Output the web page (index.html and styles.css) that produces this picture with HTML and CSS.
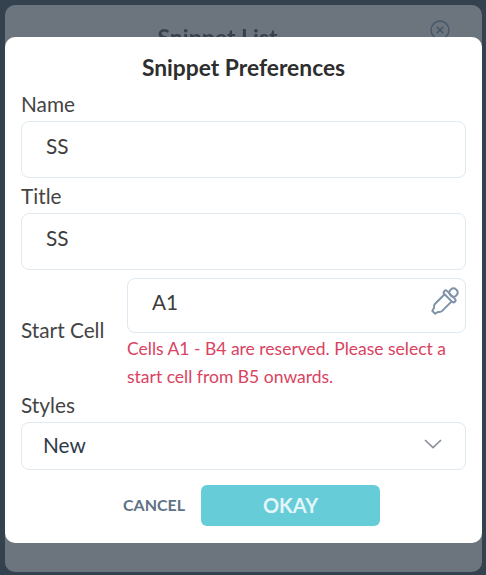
FILE: index.html
```html
<!DOCTYPE html>
<html lang="en">
<head>
<meta charset="utf-8">
<title>Snippet Preferences</title>
<link rel="stylesheet" href="styles.css">
</head>
<body>
<div class="panel">
  <div class="panel-head">
    <span class="panel-title">Snippet List</span>
    <svg class="panel-close" viewBox="0 0 20 20" width="20" height="20" aria-hidden="true">
      <circle cx="10" cy="10" r="9" fill="none" stroke="#46566a" stroke-width="1.4"/>
      <path d="M6.8 6.8l6.4 6.4M13.200 6.800l-6.400 6.400" fill="none" stroke="#46566a" stroke-width="1.600"/>
    </svg>
  </div>
  <div class="dialog">
    <h1 class="dialog-title">Snippet Preferences</h1>
    <div class="label label-name">Name</div>
    <div class="field field-tall"><span class="value">SS</span></div>
    <div class="label label-title">Title</div>
    <div class="field field-tall field-title"><span class="value">SS</span></div>
    <div class="start-row">
      <div class="start-label">Start Cell</div>
      <div class="start-main">
        <div class="field field-start">
          <span class="value">A1</span>
          <svg class="picker" viewBox="0 0 28 28" width="28" height="28" aria-hidden="true">
            <g transform="rotate(45 14 14)" fill="none" stroke="#7f93a8" stroke-width="2" stroke-linejoin="round">
              <rect x="10" y="-2" width="8" height="8" rx="3.500"/>
              <rect x="6.500" y="5.500" width="15" height="4" rx="2"/>
              <path d="M9 9.500v13.500c0 1.500 .5 2.500 2 3.500l1 3.500h4l1-3.500c1.500-1 2-2 2-3.500v-13.500"/>
            </g>
          </svg>
        </div>
        <p class="error">Cells A1 - B4 are reserved. Please select a start cell from B5 onwards.</p>
      </div>
    </div>
    <div class="label label-styles">Styles</div>
    <div class="field field-select">
      <span class="select-value">New</span>
      <svg class="chevron" viewBox="0 0 18 10" width="18" height="10" aria-hidden="true">
        <path d="M1 1l8 7.500 8-7.500" fill="none" stroke="#8a9199" stroke-width="1.700"/>
      </svg>
    </div>
    <div class="actions">
      <span class="cancel">CANCEL</span>
      <span class="okay">OKAY</span>
    </div>
  </div>
</div>
</body>
</html>
```
FILE: styles.css
```css
html, body {
  margin: 0;
  height: 100%;
}
body {
  box-sizing: border-box;
  padding: 5px 4px 3px 5px;
  background: #34424f;
  font-family: Lato, "Open Sans", sans-serif;
  color: #3a3a3a;
  overflow: hidden;
}
.panel {
  box-sizing: border-box;
  height: 567px;
  background: #6c757e;
  border-radius: 10px;
  overflow: hidden;
  filter: blur(0.6px);
}
.panel-head {
  position: relative;
  height: 32px;
  overflow: hidden;
  text-align: center;
  padding-right: 52px;
}
.panel-title {
  display: block;
  padding-top: 20px;
  font-size: 23px;
  font-weight: 700;
  line-height: 24px;
  color: #37424e;
}
.panel-close {
  position: absolute;
  top: 15px;
  right: 32px;
}
.dialog {
  box-sizing: border-box;
  height: 506px;
  padding: 17px 16px 0 16px;
  background: #fff;
  border-radius: 10px;
}
.dialog-title {
  margin: 0;
  font-size: 22.800px;
  font-weight: 700;
  line-height: 26px;
  text-align: center;
  color: #2e2e2e;
}
.label {
  font-size: 20.800px;
  line-height: 24px;
  color: #444;
}
.label-name {
  margin-top: 12px;
  margin-bottom: 5px;
}
.label-title {
  margin-top: 6px;
  margin-bottom: 5px;
}
.label-styles {
  margin-top: 2px;
  margin-bottom: 5px;
}
.field {
  box-sizing: border-box;
  display: flex;
  align-items: center;
  background: #fff;
  border: 1.500px solid #dfe9ef;
  border-radius: 8px;
}
.field-tall {
  width: 445px;
  height: 57px;
  padding: 0 0 8px 24px;
}
.value {
  font-size: 20.800px;
  color: #3d3d3d;
}
.start-row {
  display: flex;
  align-items: flex-start;
  margin-top: 8px;
}
.start-label {
  width: 106px;
  flex: none;
  padding-top: 40px;
  font-size: 20.800px;
  line-height: 24px;
  color: #444;
}
.start-main {
  flex: 1;
  min-width: 0;
}
.field-start {
  width: 339px;
  height: 55px;
  padding: 0 6px 9px 24px;
  justify-content: space-between;
}
.error {
  margin: 2px 0 0;
  width: 330px;
  font-size: 17.500px;
  line-height: 28px;
  color: #d9435f;
}
.field-select {
  width: 445px;
  height: 48px;
  padding: 0 23px 3px 21px;
  justify-content: space-between;
}
.select-value {
  font-size: 20.800px;
  color: #2f3a48;
}
.chevron {
  margin-top: -2px;
}
.actions {
  display: flex;
  align-items: center;
  margin-top: 15px;
  padding-left: 102px;
}
.cancel {
  width: 78px;
  flex: none;
  margin-top: -3px;
  font-size: 16px;
  font-weight: 700;
  color: #5e7287;
}
.okay {
  box-sizing: border-box;
  width: 179px;
  height: 41px;
  display: flex;
  align-items: center;
  justify-content: center;
  padding-bottom: 2px;
  background: #66ccd8;
  border-radius: 6px;
  font-size: 20px;
  font-weight: 700;
  color: #e4f6f8;
}
```
